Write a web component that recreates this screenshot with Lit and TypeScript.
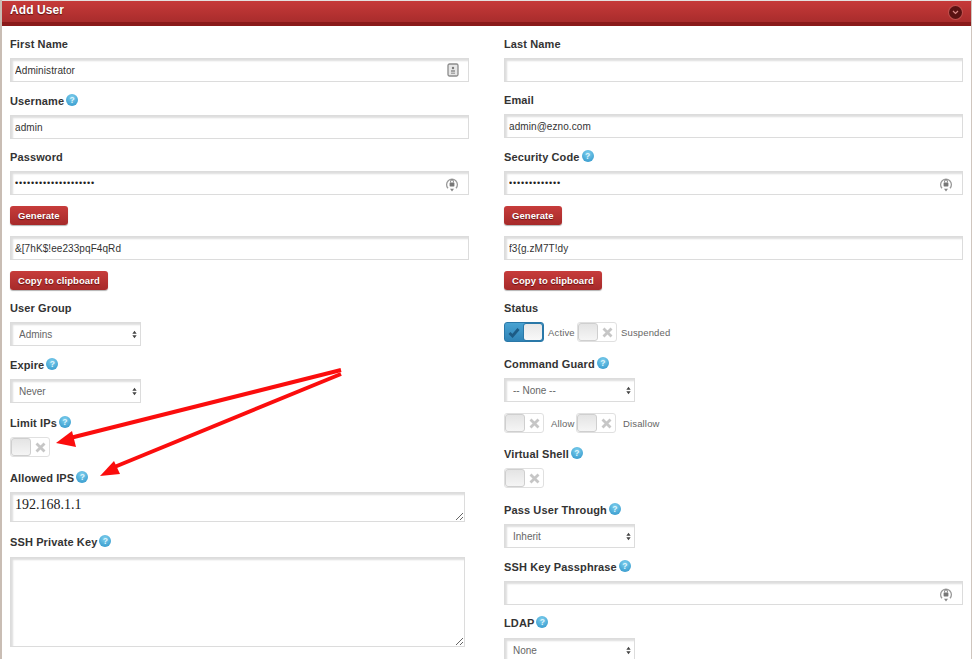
import { LitElement, html, css, svg } from "lit";
import { customElement } from "lit/decorators.js";

const idIcon = svg`<svg class="ficon" width="12" height="14" viewBox="0 0 12 14"><rect x="1" y="1" width="10" height="12" rx="1.5" fill="#e6e6e6" stroke="#8c8c8c" stroke-width="1.3"/><circle cx="6" cy="5" r="1.2" fill="#777"/><rect x="4" y="7.4" width="4" height="1.2" fill="#777"/><rect x="4" y="9.6" width="4" height="1.2" fill="#999"/></svg>`;
const lockIcon = svg`<svg class="ficon" width="14" height="16" viewBox="0 0 14 16"><path d="M3 12.2A5.4 5.4 0 1 1 11 12.2" fill="none" stroke="#999" stroke-width="1.3"/><path d="M7 15.5 5 12.8h4z" fill="#888"/><rect x="4.6" y="6.4" width="4.8" height="4" rx=".6" fill="#777"/><path d="M5.6 6.4V5.2a1.4 1.4 0 0 1 2.8 0v1.2" fill="none" stroke="#777" stroke-width="1"/></svg>`;
const xIcon = svg`<svg width="11" height="11" viewBox="0 0 11 11"><path d="M1.5 1.5l8 8M9.5 1.5l-8 8" stroke="#c6c6c6" stroke-width="2.8"/></svg>`;
const checkIcon = svg`<svg width="12" height="11" viewBox="0 0 12 11"><path d="M1.5 6l3 3L10.5 2" fill="none" stroke="#1d5b85" stroke-width="2.8"/></svg>`;

@customElement("app-root")
export class AppRoot extends LitElement {
  static styles = css`
    :host { display: block; position: relative; width: 975px; height: 659px; overflow: hidden; background: #fff; font-family: "Liberation Sans", Arial, sans-serif; color: #333; }
    .panel { width: 969px; height: 659px; box-sizing: border-box; margin-left: 2px; position: relative; }
    .stripe-l { position: absolute; left: 0; top: 0; width: 2px; height: 659px; background: #c9bdb4; }
    .stripe-r { position: absolute; left: 971px; top: 0; width: 1px; height: 659px; background: #cfc6bf; }
    .head { height: 26px; box-sizing: border-box; border-top: 1px solid #e4e0de; border-bottom: 4px solid #8a1a1a; background: linear-gradient(#c63a39, #a92c2c); display: flex; justify-content: space-between; align-items: flex-start; padding: 0 9px 0 8px; }
    .title { color: #fff; font-size: 12px; font-weight: bold; letter-spacing: .1px; line-height: 18px; text-shadow: 0 1px 1px rgba(60,0,0,.7); }
    .chev { width: 13px; height: 13px; margin-top: 5px; border-radius: 50%; background: #5a1212; box-shadow: 0 0 0 1px #c0504d; display: flex; align-items: center; justify-content: center; }
    .cols { display: grid; grid-template-columns: 459px 459px; column-gap: 35px; padding: 11px 8px 0; }
    .col { display: flex; flex-direction: column; align-items: flex-start; }
    .lab { display: flex; align-items: center; gap: 2px; height: 14px; font-size: 11px; font-weight: bold; letter-spacing: .12px; color: #333; margin-bottom: 7px; white-space: nowrap; }
    .help { width: 12px; height: 12px; border-radius: 50%; background: radial-gradient(circle at 50% 30%, #7fd0ee, #2b92c8); color: #dff4fc; font-size: 8.5px; line-height: 12px; text-align: center; font-weight: bold; letter-spacing: 0; margin-top: -2px; }
    .box { position: relative; width: 459px; height: 24px; }
    .ficon { position: absolute; right: 10px; top: 5px; }
    input, select, textarea { display: block; box-sizing: border-box; margin: 0; background: #fff; border: 1px solid #dcdcdc; border-radius: 0; outline: none; box-shadow: inset 2px 2px 2px #dedede; font-family: inherit; color: #333; }
    input { width: 459px; height: 24px; padding: 0 4px; font-size: 10px; letter-spacing: .08px; }
    input[type=password] { font-size: 9px; letter-spacing: .85px; color: #222; }
    select { appearance: none; -webkit-appearance: none; width: 131px; height: 24px; padding: 0 8px; font-size: 10px; color: #666; background: #fff; }
    .sel { position: relative; width: 131px; height: 24px; }
    .sel svg { position: absolute; right: 4px; top: 8px; }
    textarea { width: 455px; font-family: "Liberation Serif", serif; font-size: 14px; color: #222; padding: 4px; line-height: 16px; }
    .t30 { height: 30px; }
    .t90 { height: 90px; }
    button { display: block; height: 19px; box-sizing: border-box; border: 0; border-radius: 3px; padding: 0 8px; background: linear-gradient(#c73c3b, #a62a2a); box-shadow: 0 1px 1px rgba(0,0,0,.3); color: #fff; font: bold 9.5px "Liberation Sans", Arial, sans-serif; letter-spacing: .06px; text-shadow: 0 1px 1px rgba(70,0,0,.7); }
    .row { display: flex; align-items: center; font-size: 9.5px; letter-spacing: .15px; color: #666; }
    .ta { margin-left: 4px; margin-right: 4px; width: 25px; }
    .tb { margin-left: 7px; margin-right: 7px; width: 18px; }
    .toggle { width: 40px; height: 20px; box-sizing: border-box; border: 1px solid #e0e0e0; border-radius: 3px; background: #fff; display: flex; align-items: center; flex: none; }
    .knob { width: 20px; height: 18px; box-sizing: border-box; border: 1px solid #cfcfcf; border-radius: 3px; background: linear-gradient(#e4e4e4, #f5f5f5); }
    .mark { flex: 1; display: flex; justify-content: center; }
    .on { background: linear-gradient(#4aa3d2, #2f83b6); border-color: #2a78a8; flex-direction: row; }
    .on .knob { border-color: #2a78a8; background: linear-gradient(#e8e8e8, #f8f8f8); }
    .g11 { margin-top: 11px; } .g12 { margin-top: 12px; } .g13 { margin-top: 13px; } .g14 { margin-top: 14px; } .g15 { margin-top: 15px; }
    .l8 { margin-bottom: 8px; }
    .arrows { position: absolute; left: 0; top: 0; pointer-events: none; }
  `;

  private help() { return html`<span class="help">?</span>`; }
  private lab(text: string, help = false, cls = "") {
    return html`<div class="lab ${cls}">${text}${help ? this.help() : ""}</div>`;
  }
  private sel(text: string) {
    return html`<div class="sel"><select><option>${text}</option></select>
      <svg width="5" height="9" viewBox="0 0 6 9"><path d="M3 0l2.6 3.5H.4zM3 9L.4 5.5h5.2z" fill="#444"/></svg></div>`;
  }
  private off() { return html`<div class="toggle"><div class="knob"></div><div class="mark">${xIcon}</div></div>`; }
  private on() { return html`<div class="toggle on"><div class="mark">${checkIcon}</div><div class="knob"></div></div>`; }

  render() {
    return html`
      <div class="stripe-l"></div>
      <div class="stripe-r"></div>
      <div class="panel">
        <div class="head">
          <div class="title">Add User</div>
          <div class="chev"><svg width="7" height="5" viewBox="0 0 7 5"><path d="M1 1l2.5 2.5L6 1" fill="none" stroke="#d98a88" stroke-width="1.2"/></svg></div>
        </div>
        <div class="cols">
          <div class="col">
            ${this.lab("First Name")}
            <div class="box"><input type="text" value="Administrator" />${idIcon}</div>
            <div class="g12">${this.lab("Username", true)}</div>
            <input type="text" value="admin" />
            <div class="g11">${this.lab("Password")}</div>
            <div class="box"><input type="password" value="12345678901234567890" />${lockIcon}</div>
            <button class="g11">Generate</button>
            <input class="g11" type="text" value="&[7hK$!ee233pqF4qRd" />
            <button class="g11">Copy to clipboard</button>
            <div class="g11">${this.lab("User Group")}</div>
            ${this.sel("Admins")}
            <div class="g12">${this.lab("Expire", true)}</div>
            ${this.sel("Never")}
            <div class="g13">${this.lab("Limit IPs", true)}</div>
            ${this.off()}
            <div class="g14">${this.lab("Allowed IPS", true)}</div>
            <textarea class="t30">192.168.1.1</textarea>
            <div class="g13">${this.lab("SSH Private Key", true, "l8")}</div>
            <textarea class="t90"></textarea>
          </div>
          <div class="col">
            ${this.lab("Last Name")}
            <input type="text" value="" />
            <div class="g11">${this.lab("Email")}</div>
            <input type="text" value="admin@ezno.com" />
            <div class="g12">${this.lab("Security Code", true)}</div>
            <div class="box"><input type="password" value="1234567890123" />${lockIcon}</div>
            <button class="g11">Generate</button>
            <input class="g11" type="text" value="f3{g.zM7T!dy" />
            <button class="g11">Copy to clipboard</button>
            <div class="g11">${this.lab("Status")}</div>
            <div class="row">${this.on()}<span class="ta">Active</span>${this.off()}<span class="ta">Suspended</span></div>
            <div class="g15">${this.lab("Command Guard", true)}</div>
            ${this.sel("-- None --")}
            <div class="row g11">${this.off()}<span class="tb">Allow</span>${this.off()}<span class="tb">Disallow</span></div>
            <div class="g14">${this.lab("Virtual Shell", true)}</div>
            ${this.off()}
            <div class="g15">${this.lab("Pass User Through", true)}</div>
            ${this.sel("Inherit")}
            <div class="g12">${this.lab("SSH Key Passphrase", true)}</div>
            <div class="box"><input type="password" value="" />${lockIcon}</div>
            <div class="g11">${this.lab("LDAP", true, "l8")}</div>
            ${this.sel("None")}
          </div>
        </div>
      </div>
      <svg class="arrows" width="975" height="659" viewBox="0 0 975 659">
        <path d="M341 370 70 438" stroke="#fb0d0d" stroke-width="4" fill="none"/>
        <path d="M56 443 72 431 76 447z" fill="#fb0d0d"/>
        <path d="M341 374 112 468" stroke="#fb0d0d" stroke-width="4" fill="none"/>
        <path d="M100 476 114 461 120 474z" fill="#fb0d0d"/>
      </svg>
    `;
  }
}
